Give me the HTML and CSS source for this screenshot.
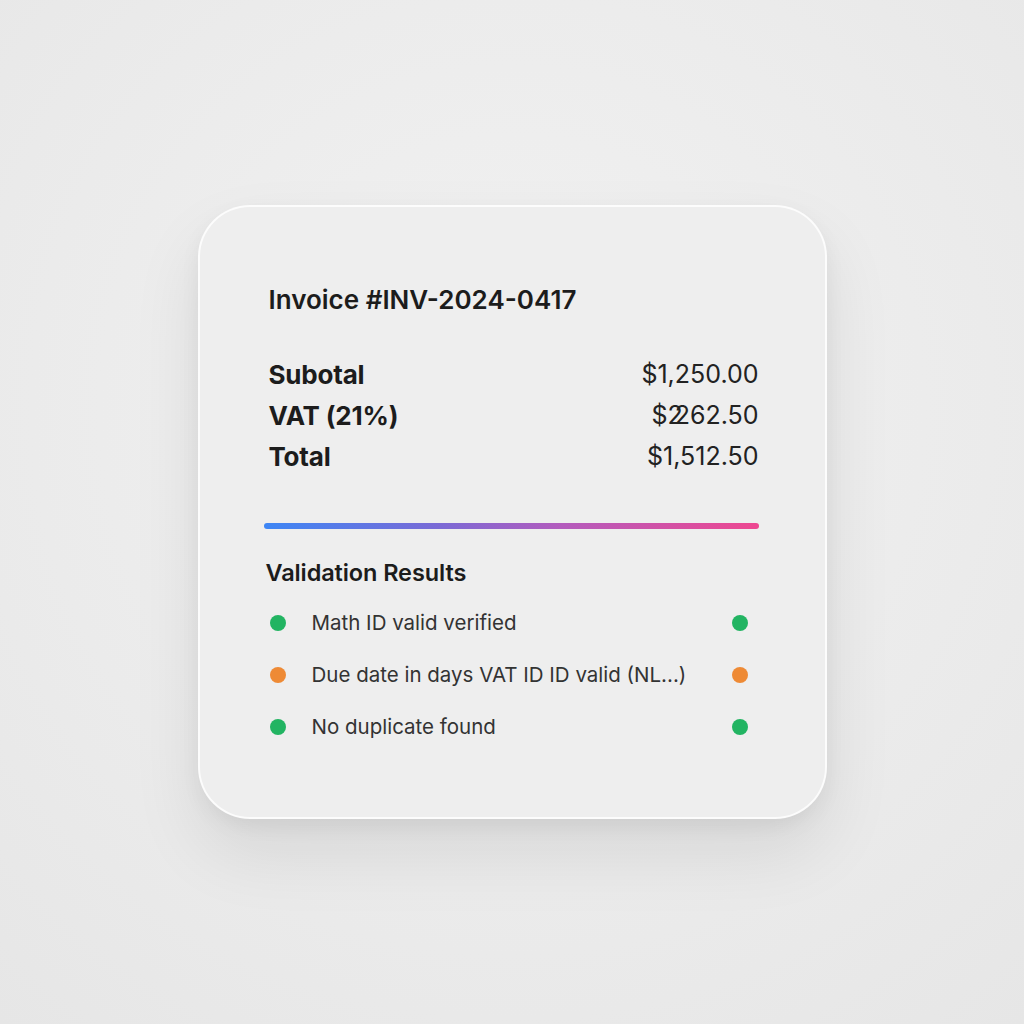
FILE: index.html
```html
<!DOCTYPE html>
<html lang="en">
<head>
    <meta charset="UTF-8">
    <meta name="viewport" content="width=device-width, initial-scale=1.0">
    <title>Invoice INV-2024-0417</title>
    <link rel="stylesheet" href="styles.css">
</head>
<body>
    <main class="card">
        <h1 class="title">Invoice #INV-2024-0417</h1>

        <div class="summary">
            <div class="row"><span class="label">Subotal</span><span class="value">$1,250.00</span></div>
            <div class="row"><span class="label">VAT (21%)</span><span class="value">$<span class="overlap">2</span>262.50</span></div>
            <div class="row"><span class="label">Total</span><span class="value">$1,512.50</span></div>
        </div>

        <div class="bar"></div>

        <h2 class="section">Validation Results</h2>
        <ul class="checks">
            <li><span class="dot ok"></span><span class="text">Math ID valid verified</span><span class="dot ok"></span></li>
            <li><span class="dot warn"></span><span class="text">Due date in days VAT ID ID valid (NL...)</span><span class="dot warn"></span></li>
            <li><span class="dot ok"></span><span class="text">No duplicate found</span><span class="dot ok"></span></li>
        </ul>
    </main>
</body>
</html>
```

FILE: styles.css
```css
/* Page */
body { margin: 0; height: 100vh; display: flex; align-items: center; justify-content: center; font-family: Inter, "Noto Sans", sans-serif; color: #1c1c1c; background: radial-gradient(circle at 50% 40%, #f2f2f2 0%, #ebebeb 60%, #e6e6e6 100%); }

/* Card */
.card { box-sizing: border-box; width: 629px; height: 614px; margin-top: -1px; padding: 78px 66px 0 68px; border-radius: 52px; background: #eeeeee; border: 2px solid rgba(255, 255, 255, 0.8); box-shadow: 0 34px 70px rgba(0, 0, 0, 0.09), 0 8px 20px rgba(0, 0, 0, 0.05); }

.title { margin: 0 0 0 1px; font-size: 26px; line-height: 30px; font-weight: 600; letter-spacing: 0; }

/* Totals */
.summary { margin-top: 39px; }
.row { display: flex; justify-content: space-between; align-items: center; height: 41px; font-size: 25px; }
.label { font-size: 26px; font-weight: 700; margin-left: 1px; letter-spacing: -0.2px; }
.value { font-weight: 400; color: #222; }
.overlap { letter-spacing: -8px; }

/* Gradient divider */
.bar { height: 6px; margin: 46px 0 0 -4px; border-radius: 3px; background: linear-gradient(90deg, #3d86f5 0%, #7a6ad6 35%, #b35bbd 60%, #ee4790 100%); }

/* Validation */
.section { margin: 30px 0 0 -2px; font-size: 23.5px; line-height: 28px; font-weight: 600; letter-spacing: -0.1px; }
.checks { list-style: none; margin: 10px 0 0; padding: 0; }
.checks li { display: flex; align-items: center; height: 52px; font-size: 20.5px; color: #333; }
.checks .text { flex: 1; margin-left: 26px; }
.dot { width: 16px; height: 16px; border-radius: 50%; margin-left: 2px; }
.checks .dot:last-child { margin-right: 11px; }
.ok { background: #22b462; }
.warn { background: #ee8a35; }
```
